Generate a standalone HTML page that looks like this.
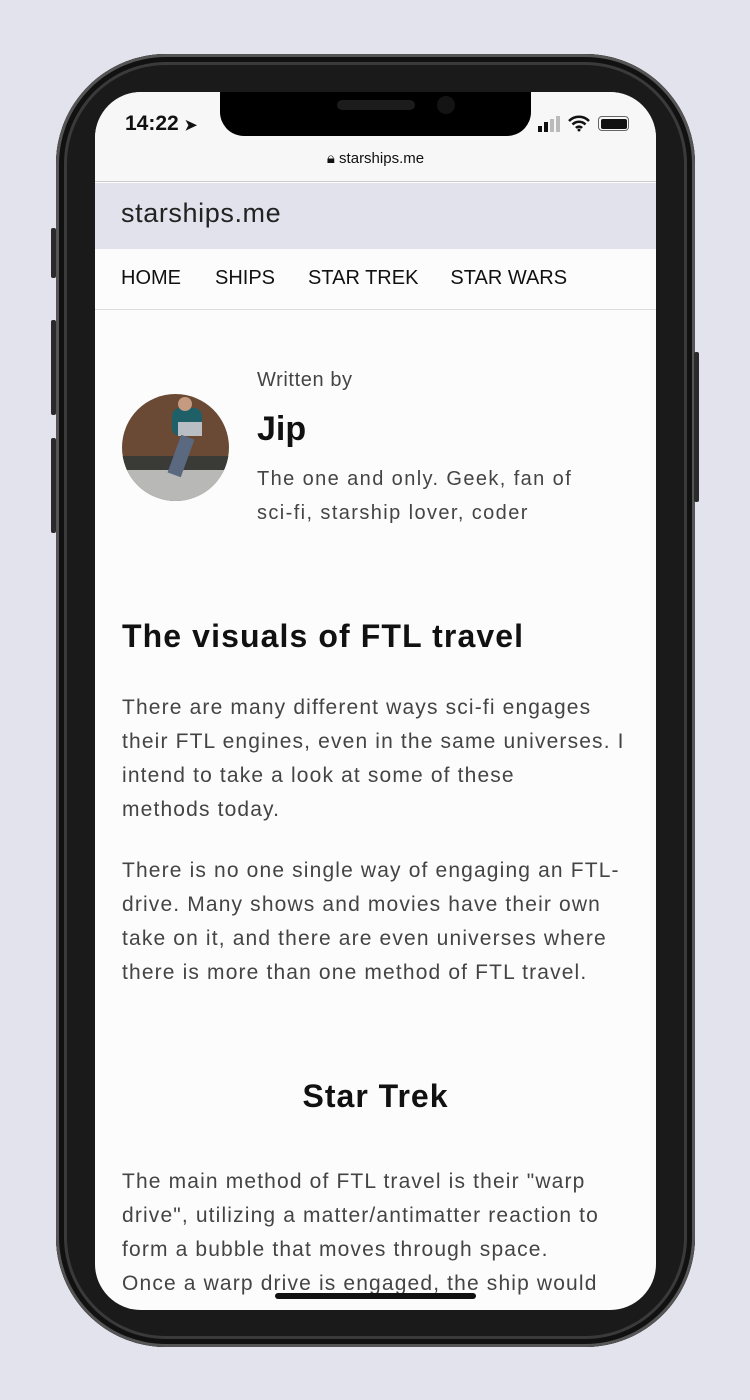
<!DOCTYPE html>
<html><head><meta charset="utf-8"><style>
*{margin:0;padding:0;box-sizing:border-box}
body{width:750px;height:1400px;background:#e3e3ed;position:relative;overflow:hidden;font-family:"Liberation Sans",sans-serif;color:#222}
.phone{position:absolute;left:56px;top:54px;width:639px;height:1293px;border-radius:110px;background:#1a1a1a;box-shadow:inset 0 0 0 3px #555,inset 0 0 0 8px #111,inset 0 0 0 11px #3a3a3a}
.btn{position:absolute;background:#2a2a2a;width:5px;border-radius:2px}
.screen{position:absolute;left:95px;top:92px;width:561px;height:1218px;border-radius:46px;background:#fcfcfd;overflow:hidden}
.notch{position:absolute;left:125px;top:0;width:311px;height:44px;background:#000;border-radius:0 0 24px 24px}
.p{position:absolute;left:27px;font-size:21px;color:#444;letter-spacing:1.15px;line-height:34px;white-space:nowrap}
</style></head><body>
<div class="phone"></div>
<div class="btn" style="left:51px;top:228px;height:50px"></div>
<div class="btn" style="left:51px;top:320px;height:95px"></div>
<div class="btn" style="left:51px;top:438px;height:95px"></div>
<div class="btn" style="left:694px;top:352px;height:150px"></div>
<div class="screen">
 <div style="position:absolute;left:0;top:0;width:561px;height:90px;background:#f7f7f8;border-bottom:1px solid #ccc"></div>
 <div class="notch"><div style="position:absolute;left:117px;top:8px;width:78px;height:10px;border-radius:5px;background:#1c1c1c"></div><div style="position:absolute;left:217px;top:4px;width:18px;height:18px;border-radius:50%;background:#141414"></div></div>
 <div style="position:absolute;left:30px;top:20px;font-size:21px;font-weight:bold;color:#111">14:22 <span style="font-size:15px">➤</span></div>
 <div style="position:absolute;left:443px;top:34px;width:4px;height:6px;background:#111"></div>
 <div style="position:absolute;left:449px;top:30px;width:4px;height:10px;background:#111"></div>
 <div style="position:absolute;left:455px;top:27px;width:4px;height:13px;background:#bbb"></div>
 <div style="position:absolute;left:461px;top:24px;width:4px;height:16px;background:#bbb"></div>
 <svg style="position:absolute;left:472px;top:22px" width="24" height="18" viewBox="0 0 24 18"><path d="M2 7a14 14 0 0 1 20 0M5.5 10.5a9 9 0 0 1 13 0M9 14a4 4 0 0 1 6 0" stroke="#111" stroke-width="2.5" fill="none"/><circle cx="12" cy="16" r="1.5" fill="#111"/></svg>
 <div style="position:absolute;left:503px;top:24px;width:31px;height:15px;border:1.5px solid #666;border-radius:4px;padding:1.5px"><div style="width:100%;height:100%;background:#111;border-radius:2px"></div></div>
 <div style="position:absolute;left:0;width:561px;top:58px;text-align:center;font-size:15px;color:#111">🔒︎ starships.me</div>
 <div style="position:absolute;left:0;top:91px;width:561px;height:66px;background:#e2e2ec"></div>
 <div style="position:absolute;left:26px;top:106px;font-size:27px;color:#222;letter-spacing:.6px">starships.me</div>
 <div style="position:absolute;left:26px;top:175px;font-size:20px;color:#111;white-space:nowrap"><span>HOME</span><span style="margin-left:34px">SHIPS</span><span style="margin-left:33px">STAR TREK</span><span style="margin-left:32px">STAR WARS</span></div>
 <div style="position:absolute;left:0;top:217px;width:561px;height:1px;background:#ddd"></div>
 <div style="position:absolute;left:27px;top:302px;width:107px;height:107px;border-radius:50%;overflow:hidden;background:#6a4a35">
  <div style="position:absolute;left:0;top:62px;width:107px;height:14px;background:#3a3a36"></div>
  <div style="position:absolute;left:0;top:76px;width:107px;height:31px;background:#b8b8b6"></div>
  <div style="position:absolute;left:50px;top:14px;width:30px;height:28px;background:#1f5f68;border-radius:8px"></div>
  <div style="position:absolute;left:56px;top:3px;width:14px;height:14px;background:#c49a80;border-radius:50%"></div>
  <div style="position:absolute;left:56px;top:28px;width:24px;height:14px;background:#b8bec4"></div>
  <div style="position:absolute;left:52px;top:42px;width:14px;height:40px;background:#5a6880;transform:rotate(20deg)"></div>
 </div>
 <div style="position:absolute;left:162px;top:277px;font-size:20px;color:#444;letter-spacing:.6px">Written by</div>
 <div style="position:absolute;left:162px;top:318px;font-size:34px;font-weight:bold;color:#111">Jip</div>
 <div class="p" style="left:162px;top:370px;font-size:20px;letter-spacing:1.4px">The one and only. Geek, fan of</div>
 <div class="p" style="left:162px;top:404px;font-size:20px;letter-spacing:1.4px">sci-fi, starship lover, coder</div>
 <div style="position:absolute;left:27px;top:526px;font-size:32px;font-weight:bold;color:#111;letter-spacing:1.1px">The visuals of FTL travel</div>
 <div class="p" style="top:599px">There are many different ways sci-fi engages</div>
 <div class="p" style="top:633px">their FTL engines, even in the same universes. I</div>
 <div class="p" style="top:667px">intend to take a look at some of these</div>
 <div class="p" style="top:701px">methods today.</div>
 <div class="p" style="top:762px">There is no one single way of engaging an FTL-</div>
 <div class="p" style="top:796px">drive. Many shows and movies have their own</div>
 <div class="p" style="top:830px">take on it, and there are even universes where</div>
 <div class="p" style="top:864px">there is more than one method of FTL travel.</div>
 <div style="position:absolute;left:0;width:561px;top:986px;text-align:center;font-size:32px;font-weight:bold;color:#111;letter-spacing:1px">Star Trek</div>
 <div class="p" style="top:1073px">The main method of FTL travel is their "warp</div>
 <div class="p" style="top:1107px">drive", utilizing a matter/antimatter reaction to</div>
 <div class="p" style="top:1141px">form a bubble that moves through space.</div>
 <div class="p" style="top:1175px">Once a warp drive is engaged, the ship would</div>
 <div style="position:absolute;left:180px;top:1201px;width:201px;height:6px;border-radius:3px;background:#111"></div>
</div>
</body></html>
